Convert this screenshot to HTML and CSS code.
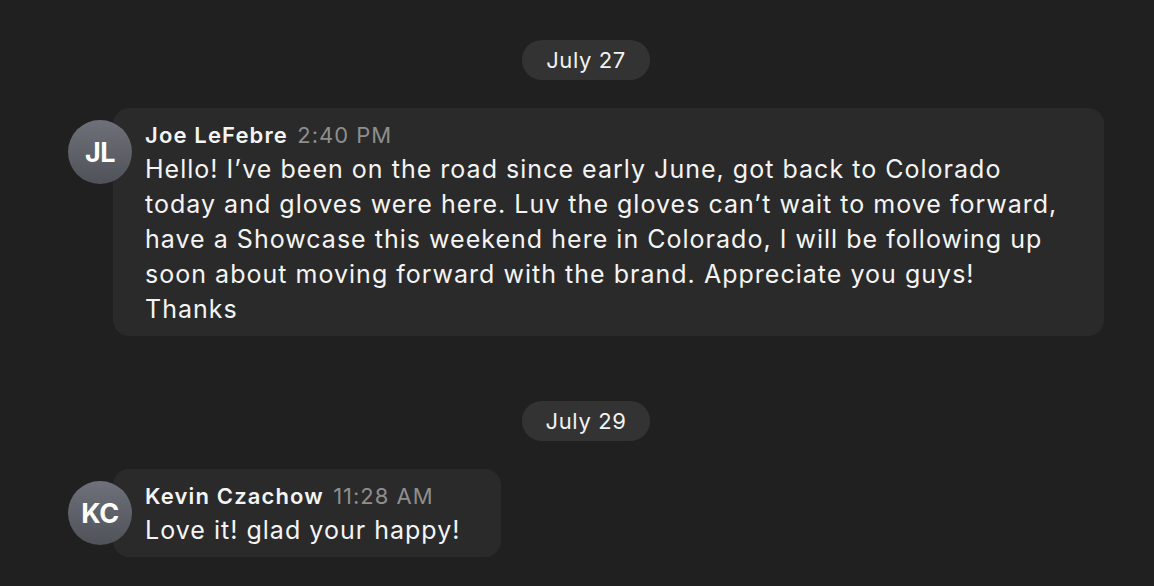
FILE: index.html
```html
<!DOCTYPE html>
<html>
<head>
<meta charset="utf-8">
<link rel="stylesheet" href="styles.css">
</head>
<body>
<div class="thread">
  <div class="date-row"><span class="date-pill">July 27</span></div>
  <div class="msg">
    <div class="avatar">JL</div>
    <div class="bubble wide">
      <div class="meta"><span class="name">Joe LeFebre</span> <span class="time">2:40 PM</span></div>
      <div class="body">Hello! I’ve been on the road since early June, got back to Colorado<br>today and gloves were here. Luv the gloves can’t wait to move forward,<br>have a Showcase this weekend here in Colorado, I will be following up<br>soon about moving forward with the brand. Appreciate you guys!<br>Thanks</div>
    </div>
  </div>
  <div class="date-row gap-big"><span class="date-pill">July 29</span></div>
  <div class="msg">
    <div class="avatar">KC</div>
    <div class="bubble">
      <div class="meta"><span class="name">Kevin Czachow</span> <span class="time">11:28 AM</span></div>
      <div class="body">Love it! glad your happy!</div>
    </div>
  </div>
</div>
</body>
</html>
```
FILE: styles.css
```css
html, body {
  margin: 0;
  padding: 0;
  background: #202020;
  height: 100%;
}
body {
  font-family: Inter, "Noto Sans", sans-serif;
  color: #f4f4f4;
  overflow: hidden;
}
.thread {
  margin-left: 68px;
  width: 1036px;
  padding-top: 40px;
  display: flex;
  flex-direction: column;
}
.date-row {
  display: flex;
  justify-content: center;
  margin-bottom: 28px;
}
.date-row.gap-big {
  margin-top: 65px;
}
.date-pill {
  display: inline-flex;
  align-items: center;
  height: 40px;
  padding: 0 24px;
  border-radius: 20px;
  background: #333333;
  font-size: 22px;
  letter-spacing: 0.6px;
  color: #f2f2f2;
}
.msg {
  display: flex;
  align-items: flex-start;
}
.avatar {
  position: relative;
  z-index: 1;
  flex: 0 0 64px;
  width: 64px;
  height: 64px;
  margin-top: 12px;
  margin-right: -19px;
  border-radius: 50%;
  background: linear-gradient(#6e7179, #4f5259);
  display: flex;
  align-items: center;
  justify-content: center;
  font-size: 27px;
  font-weight: 700;
  letter-spacing: -0.5px;
  color: #ffffff;
}
.bubble {
  background: #2a2a2a;
  border-radius: 16px;
  padding: 12px 40px 9px 32px;
}
.bubble.wide {
  flex: 1;
}
.meta {
  font-size: 22px;
  line-height: 30px;
  height: 32px;
  white-space: nowrap;
}
.name {
  font-weight: 600;
  letter-spacing: 1.15px;
  color: #f4f4f4;
}
.time {
  letter-spacing: 1px;
  color: #8e8e8e;
  margin-left: 3px;
}
.body {
  font-size: 25px;
  line-height: 35px;
  letter-spacing: 1.02px;
  white-space: nowrap;
}
```
